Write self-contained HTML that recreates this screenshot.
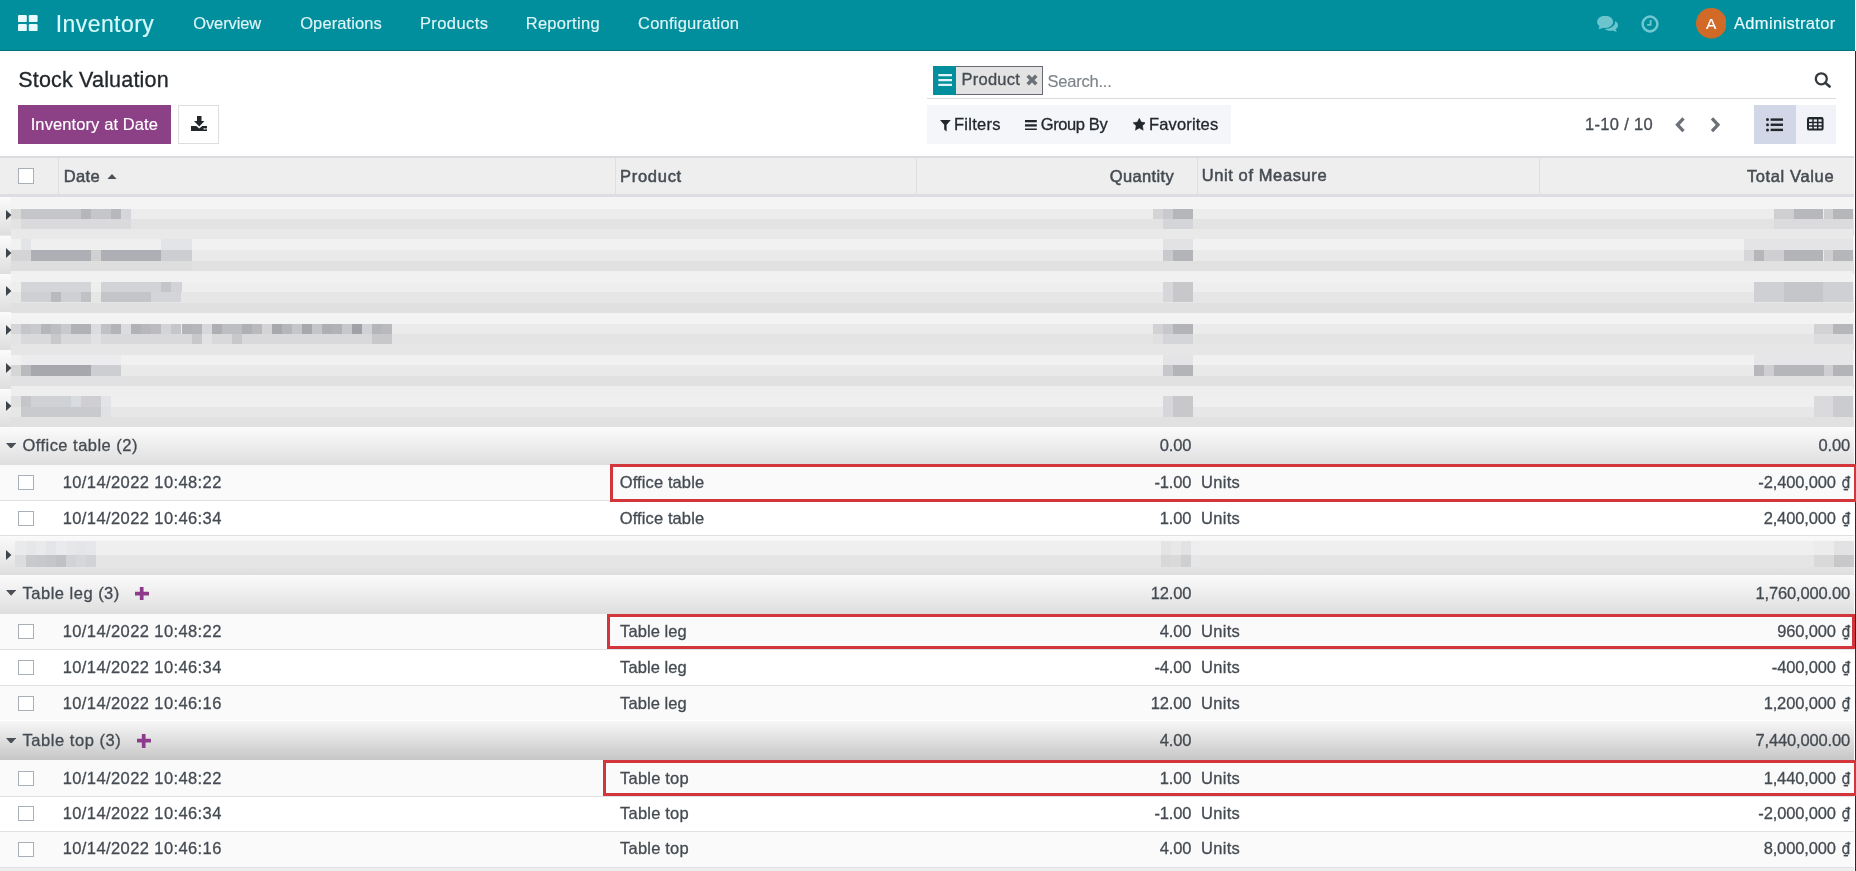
<!DOCTYPE html>
<html><head><meta charset="utf-8"><title>Stock Valuation</title>
<style>
html,body{margin:0;padding:0;}
body{width:1856px;height:871px;overflow:hidden;position:relative;background:#fff;font-family:"Liberation Sans", sans-serif;}
#p{position:absolute;left:0;top:0;width:1856px;height:871px;overflow:hidden;}
#p div,#p svg,#p .t{position:absolute;}
#p .t{line-height:1;white-space:pre;}
</style></head><body><div id="p">
<div style="left:0.00px;top:0.00px;width:1855.30px;height:50.60px;background:#028f9d;border-bottom:1px solid #02707b;box-sizing:border-box;"></div>
<div style="left:18.00px;top:105.20px;width:153.00px;height:38.50px;background:#8c4186;"></div>
<div style="left:178.00px;top:105.20px;width:40.70px;height:38.50px;background:#fff;border:1px solid #dedede;box-sizing:border-box;"></div>
<div style="left:927.00px;top:98.20px;width:908.70px;height:1.00px;background:#d9dcdf;"></div>
<div style="left:933.00px;top:66.20px;width:109.70px;height:28.40px;background:#e3e3e3;border:1px solid #666c72;box-sizing:border-box;"></div>
<div style="left:933.00px;top:66.20px;width:23.00px;height:28.40px;background:#028f9d;"></div>
<div style="left:927.00px;top:105.20px;width:303.80px;height:38.50px;background:#f5f6f9;"></div>
<div style="left:1754.00px;top:105.20px;width:42.00px;height:38.50px;background:#d2d7e7;"></div>
<div style="left:1796.00px;top:105.20px;width:39.70px;height:38.50px;background:#f2f3f8;"></div>
<div style="left:0.00px;top:156.00px;width:1854.00px;height:41.20px;background:#eeeeee;"></div>
<div style="left:0.00px;top:156.00px;width:1854.00px;height:1.80px;background:#d9dbde;"></div>
<div style="left:0.00px;top:194.00px;width:1854.00px;height:3.20px;background:#dcdee1;"></div>
<div style="left:58.00px;top:158.00px;width:1.00px;height:36.00px;background:#dddfe2;"></div>
<div style="left:615.40px;top:158.00px;width:1.00px;height:36.00px;background:#dddfe2;"></div>
<div style="left:916.40px;top:158.00px;width:1.00px;height:36.00px;background:#dddfe2;"></div>
<div style="left:1197.20px;top:158.00px;width:1.00px;height:36.00px;background:#dddfe2;"></div>
<div style="left:1539.30px;top:158.00px;width:1.00px;height:36.00px;background:#dddfe2;"></div>
<div style="left:0.00px;top:197.20px;width:1854.00px;height:11.80px;background:#f4f4f4;"></div>
<div style="left:0.00px;top:208.70px;width:1854.00px;height:10.30px;background:#ececec;"></div>
<div style="left:0.00px;top:218.70px;width:1854.00px;height:10.90px;background:#e3e3e3;"></div>
<div style="left:0.00px;top:229.30px;width:1854.00px;height:10.40px;background:#e9e9e9;"></div>
<div style="left:0.00px;top:239.40px;width:1854.00px;height:11.20px;background:#f1f1f1;"></div>
<div style="left:0.00px;top:250.30px;width:1854.00px;height:10.90px;background:#eaeaea;"></div>
<div style="left:0.00px;top:260.90px;width:1854.00px;height:10.60px;background:#e1e1e1;"></div>
<div style="left:0.00px;top:271.20px;width:1854.00px;height:10.90px;background:#f1f1f1;"></div>
<div style="left:0.00px;top:281.80px;width:1854.00px;height:10.40px;background:#eeeeee;"></div>
<div style="left:0.00px;top:291.90px;width:1854.00px;height:10.90px;background:#e6e6e6;"></div>
<div style="left:0.00px;top:302.50px;width:1854.00px;height:10.60px;background:#e0e0e0;"></div>
<div style="left:0.00px;top:312.80px;width:1854.00px;height:11.00px;background:#f3f3f3;"></div>
<div style="left:0.00px;top:323.50px;width:1854.00px;height:10.30px;background:#ebebeb;"></div>
<div style="left:0.00px;top:333.50px;width:1854.00px;height:10.90px;background:#e4e4e4;"></div>
<div style="left:0.00px;top:344.10px;width:1854.00px;height:10.70px;background:#e6e6e6;"></div>
<div style="left:0.00px;top:354.50px;width:1854.00px;height:10.90px;background:#f1f1f1;"></div>
<div style="left:0.00px;top:365.10px;width:1854.00px;height:10.90px;background:#e9e9e9;"></div>
<div style="left:0.00px;top:375.70px;width:1854.00px;height:10.60px;background:#e1e1e1;"></div>
<div style="left:0.00px;top:386.00px;width:1854.00px;height:10.40px;background:#eeeeee;"></div>
<div style="left:0.00px;top:396.10px;width:1854.00px;height:10.90px;background:#efefef;"></div>
<div style="left:0.00px;top:406.70px;width:1854.00px;height:10.30px;background:#e7e7e7;"></div>
<div style="left:0.00px;top:416.70px;width:1854.00px;height:10.50px;background:#e1e1e1;"></div>
<div style="left:0.00px;top:197.20px;width:11.00px;height:38.30px;background:linear-gradient(#fbfbfb,#dedede);"></div>
<div style="left:0.00px;top:235.50px;width:11.00px;height:38.30px;background:linear-gradient(#fbfbfb,#dedede);"></div>
<div style="left:0.00px;top:273.80px;width:11.00px;height:38.30px;background:linear-gradient(#fbfbfb,#dedede);"></div>
<div style="left:0.00px;top:312.10px;width:11.00px;height:38.30px;background:linear-gradient(#fbfbfb,#dedede);"></div>
<div style="left:0.00px;top:350.40px;width:11.00px;height:38.30px;background:linear-gradient(#fbfbfb,#dedede);"></div>
<div style="left:0.00px;top:388.70px;width:11.00px;height:38.30px;background:linear-gradient(#fbfbfb,#dedede);"></div>
<div style="left:11.00px;top:208.70px;width:10.03px;height:10.00px;background:#d8d8d8;"></div>
<div style="left:21.03px;top:208.70px;width:60.18px;height:10.00px;background:#c4c6ca;"></div>
<div style="left:81.21px;top:208.70px;width:10.03px;height:10.00px;background:#b4b6ba;"></div>
<div style="left:91.24px;top:208.70px;width:20.06px;height:10.00px;background:#c4c6ca;"></div>
<div style="left:111.30px;top:208.70px;width:10.03px;height:10.00px;background:#b6b8bc;"></div>
<div style="left:121.33px;top:208.70px;width:10.03px;height:10.00px;background:#d4d6dc;"></div>
<div style="left:21.03px;top:218.70px;width:110.33px;height:10.60px;background:#dadadc;"></div>
<div style="left:21.03px;top:239.40px;width:10.03px;height:10.90px;background:#e2e4e8;"></div>
<div style="left:31.06px;top:239.40px;width:130.39px;height:10.90px;background:#efefef;"></div>
<div style="left:161.45px;top:239.40px;width:30.09px;height:10.90px;background:#e2e4e8;"></div>
<div style="left:11.00px;top:250.30px;width:20.06px;height:10.60px;background:#d4d4d6;"></div>
<div style="left:31.06px;top:250.30px;width:60.18px;height:10.60px;background:#adafb4;"></div>
<div style="left:91.24px;top:250.30px;width:10.03px;height:10.60px;background:#d0d0d0;"></div>
<div style="left:101.27px;top:250.30px;width:60.18px;height:10.60px;background:#adafb4;"></div>
<div style="left:161.45px;top:250.30px;width:30.09px;height:10.60px;background:#cdced2;"></div>
<div style="left:11.00px;top:260.90px;width:180.54px;height:10.30px;background:#dededf;"></div>
<div style="left:21.03px;top:281.80px;width:70.21px;height:10.10px;background:#d4d5d9;"></div>
<div style="left:101.27px;top:281.80px;width:80.24px;height:10.10px;background:#d2d3d7;"></div>
<div style="left:161.45px;top:281.80px;width:10.03px;height:10.10px;background:#c4c5c9;"></div>
<div style="left:21.03px;top:291.90px;width:70.21px;height:10.60px;background:#cfd0d4;"></div>
<div style="left:51.12px;top:291.90px;width:10.03px;height:10.60px;background:#b9babe;"></div>
<div style="left:81.21px;top:291.90px;width:10.03px;height:10.60px;background:#c0c1c5;"></div>
<div style="left:101.27px;top:291.90px;width:50.15px;height:10.60px;background:#c4c5c9;"></div>
<div style="left:151.42px;top:291.90px;width:30.09px;height:10.60px;background:#d4d5d9;"></div>
<div style="left:11.00px;top:323.50px;width:10.03px;height:10.00px;background:#d6d6d8;"></div>
<div style="left:21.03px;top:323.50px;width:10.03px;height:10.00px;background:#c4c6ca;"></div>
<div style="left:31.06px;top:323.50px;width:10.03px;height:10.00px;background:#c8cacd;"></div>
<div style="left:41.09px;top:323.50px;width:10.03px;height:10.00px;background:#b4b6ba;"></div>
<div style="left:51.12px;top:323.50px;width:10.03px;height:10.00px;background:#bcbec2;"></div>
<div style="left:61.15px;top:323.50px;width:10.03px;height:10.00px;background:#c8cacd;"></div>
<div style="left:71.18px;top:323.50px;width:10.03px;height:10.00px;background:#b0b2b6;"></div>
<div style="left:81.21px;top:323.50px;width:10.03px;height:10.00px;background:#b0b2b6;"></div>
<div style="left:91.24px;top:323.50px;width:10.03px;height:10.00px;background:#dcdcde;"></div>
<div style="left:101.27px;top:323.50px;width:10.03px;height:10.00px;background:#c0c2c6;"></div>
<div style="left:111.30px;top:323.50px;width:10.03px;height:10.00px;background:#b2b4b8;"></div>
<div style="left:121.33px;top:323.50px;width:10.03px;height:10.00px;background:#dcdcde;"></div>
<div style="left:131.36px;top:323.50px;width:10.03px;height:10.00px;background:#b0b2b6;"></div>
<div style="left:141.39px;top:323.50px;width:10.03px;height:10.00px;background:#b6b8bc;"></div>
<div style="left:151.42px;top:323.50px;width:10.03px;height:10.00px;background:#bcbcbe;"></div>
<div style="left:161.45px;top:323.50px;width:10.03px;height:10.00px;background:#d2d4d8;"></div>
<div style="left:171.48px;top:323.50px;width:10.03px;height:10.00px;background:#c6c6c8;"></div>
<div style="left:181.51px;top:323.50px;width:10.03px;height:10.00px;background:#b2b4b8;"></div>
<div style="left:191.54px;top:323.50px;width:10.03px;height:10.00px;background:#b4b6ba;"></div>
<div style="left:201.57px;top:323.50px;width:10.03px;height:10.00px;background:#d8d8da;"></div>
<div style="left:211.60px;top:323.50px;width:10.03px;height:10.00px;background:#adafb4;"></div>
<div style="left:221.63px;top:323.50px;width:10.03px;height:10.00px;background:#bcbec2;"></div>
<div style="left:231.66px;top:323.50px;width:10.03px;height:10.00px;background:#bcbec2;"></div>
<div style="left:241.69px;top:323.50px;width:10.03px;height:10.00px;background:#aeb0b4;"></div>
<div style="left:251.72px;top:323.50px;width:10.03px;height:10.00px;background:#b8babe;"></div>
<div style="left:261.75px;top:323.50px;width:10.03px;height:10.00px;background:#d4d4d6;"></div>
<div style="left:271.78px;top:323.50px;width:10.03px;height:10.00px;background:#a6a8ac;"></div>
<div style="left:281.81px;top:323.50px;width:10.03px;height:10.00px;background:#b4b6ba;"></div>
<div style="left:291.84px;top:323.50px;width:10.03px;height:10.00px;background:#c4c6ca;"></div>
<div style="left:301.87px;top:323.50px;width:10.03px;height:10.00px;background:#a6a8ac;"></div>
<div style="left:311.90px;top:323.50px;width:10.03px;height:10.00px;background:#c4c6ca;"></div>
<div style="left:321.93px;top:323.50px;width:10.03px;height:10.00px;background:#adafb3;"></div>
<div style="left:331.96px;top:323.50px;width:10.03px;height:10.00px;background:#b0b2b6;"></div>
<div style="left:341.99px;top:323.50px;width:10.03px;height:10.00px;background:#c6c8cc;"></div>
<div style="left:352.02px;top:323.50px;width:10.03px;height:10.00px;background:#9fa1a6;"></div>
<div style="left:362.05px;top:323.50px;width:10.03px;height:10.00px;background:#d0d2d6;"></div>
<div style="left:372.08px;top:323.50px;width:10.03px;height:10.00px;background:#b4b6ba;"></div>
<div style="left:382.11px;top:323.50px;width:10.03px;height:10.00px;background:#b8babe;"></div>
<div style="left:21.03px;top:333.50px;width:371.11px;height:10.60px;background:#d9d9db;"></div>
<div style="left:51.12px;top:333.50px;width:10.03px;height:10.60px;background:#c8c8ca;"></div>
<div style="left:191.54px;top:333.50px;width:10.03px;height:10.60px;background:#c8c8ca;"></div>
<div style="left:231.66px;top:333.50px;width:10.03px;height:10.60px;background:#c8c8ca;"></div>
<div style="left:372.08px;top:333.50px;width:10.03px;height:10.60px;background:#c8c8ca;"></div>
<div style="left:382.11px;top:333.50px;width:10.03px;height:10.60px;background:#c8c8ca;"></div>
<div style="left:91.24px;top:333.50px;width:10.03px;height:10.60px;background:#e2e2e2;"></div>
<div style="left:201.57px;top:333.50px;width:10.03px;height:10.60px;background:#e2e2e2;"></div>
<div style="left:21.03px;top:354.50px;width:100.30px;height:10.60px;background:#ececee;"></div>
<div style="left:11.00px;top:365.10px;width:10.03px;height:10.60px;background:#d6d6d6;"></div>
<div style="left:21.03px;top:365.10px;width:10.03px;height:10.60px;background:#b8babd;"></div>
<div style="left:31.06px;top:365.10px;width:60.18px;height:10.60px;background:#a6a8ad;"></div>
<div style="left:91.24px;top:365.10px;width:30.09px;height:10.60px;background:#cdced2;"></div>
<div style="left:11.00px;top:375.70px;width:110.33px;height:10.30px;background:#e1e1e3;"></div>
<div style="left:11.00px;top:396.10px;width:10.03px;height:10.60px;background:#e0e0e0;"></div>
<div style="left:21.03px;top:396.10px;width:10.03px;height:10.60px;background:#c4c6ca;"></div>
<div style="left:31.06px;top:396.10px;width:40.12px;height:10.60px;background:#d0d1d5;"></div>
<div style="left:71.18px;top:396.10px;width:10.03px;height:10.60px;background:#d8dce0;"></div>
<div style="left:81.21px;top:396.10px;width:20.06px;height:10.60px;background:#cfcfd1;"></div>
<div style="left:101.27px;top:396.10px;width:10.03px;height:10.60px;background:#e2e4e8;"></div>
<div style="left:21.03px;top:406.70px;width:80.24px;height:10.00px;background:#c9cace;"></div>
<div style="left:101.27px;top:406.70px;width:10.03px;height:10.00px;background:#dfe1e5;"></div>
<div style="left:1152.60px;top:208.70px;width:10.10px;height:10.00px;background:#d4d4d4;"></div>
<div style="left:1162.70px;top:208.70px;width:10.00px;height:10.00px;background:#c8cace;"></div>
<div style="left:1172.70px;top:208.70px;width:19.90px;height:10.00px;background:#b4b6ba;"></div>
<div style="left:1162.70px;top:218.70px;width:29.90px;height:10.60px;background:#d4d5d9;"></div>
<div style="left:1162.70px;top:239.40px;width:29.90px;height:10.90px;background:#e2e2e4;"></div>
<div style="left:1162.70px;top:250.30px;width:10.00px;height:10.60px;background:#c9cacd;"></div>
<div style="left:1172.70px;top:250.30px;width:19.90px;height:10.60px;background:#b2b4b8;"></div>
<div style="left:1162.70px;top:281.80px;width:10.00px;height:10.10px;background:#d6d7db;"></div>
<div style="left:1172.70px;top:281.80px;width:19.90px;height:10.10px;background:#c8c8ca;"></div>
<div style="left:1162.70px;top:291.90px;width:10.00px;height:10.60px;background:#d6d7db;"></div>
<div style="left:1172.70px;top:291.90px;width:19.90px;height:10.60px;background:#c8c8ca;"></div>
<div style="left:1152.60px;top:323.50px;width:10.10px;height:10.00px;background:#d2d2d4;"></div>
<div style="left:1162.70px;top:323.50px;width:10.00px;height:10.00px;background:#c6c8cc;"></div>
<div style="left:1172.70px;top:323.50px;width:19.90px;height:10.00px;background:#b2b4b8;"></div>
<div style="left:1152.60px;top:333.50px;width:10.10px;height:10.60px;background:#e0e0e0;"></div>
<div style="left:1162.70px;top:333.50px;width:29.90px;height:10.60px;background:#d4d5d9;"></div>
<div style="left:1162.70px;top:354.50px;width:29.90px;height:10.60px;background:#e4e4e6;"></div>
<div style="left:1162.70px;top:365.10px;width:10.00px;height:10.60px;background:#c6c8cc;"></div>
<div style="left:1172.70px;top:365.10px;width:19.90px;height:10.60px;background:#b2b4b8;"></div>
<div style="left:1162.70px;top:396.10px;width:10.00px;height:10.60px;background:#d6d7db;"></div>
<div style="left:1172.70px;top:396.10px;width:19.90px;height:10.60px;background:#c8c8ca;"></div>
<div style="left:1162.70px;top:406.70px;width:10.00px;height:10.00px;background:#d6d7db;"></div>
<div style="left:1172.70px;top:406.70px;width:19.90px;height:10.00px;background:#c8c8ca;"></div>
<div style="left:1774.00px;top:208.70px;width:19.80px;height:10.00px;background:#cfcfd1;"></div>
<div style="left:1793.80px;top:208.70px;width:29.70px;height:10.00px;background:#b6b8bc;"></div>
<div style="left:1823.50px;top:208.70px;width:9.90px;height:10.00px;background:#cdced0;"></div>
<div style="left:1833.40px;top:208.70px;width:19.80px;height:10.00px;background:#b4b6ba;"></div>
<div style="left:1774.00px;top:218.70px;width:79.20px;height:10.60px;background:#dbdbdd;"></div>
<div style="left:1744.30px;top:239.40px;width:108.90px;height:10.90px;background:#e4e4e6;"></div>
<div style="left:1744.30px;top:250.30px;width:9.90px;height:10.60px;background:#d6d6d8;"></div>
<div style="left:1754.20px;top:250.30px;width:9.90px;height:10.60px;background:#b4b6ba;"></div>
<div style="left:1764.10px;top:250.30px;width:19.80px;height:10.60px;background:#cfcfd1;"></div>
<div style="left:1783.90px;top:250.30px;width:39.60px;height:10.60px;background:#b2b4b8;"></div>
<div style="left:1823.50px;top:250.30px;width:9.90px;height:10.60px;background:#cfcfd1;"></div>
<div style="left:1833.40px;top:250.30px;width:19.80px;height:10.60px;background:#b4b6ba;"></div>
<div style="left:1754.20px;top:281.80px;width:99.00px;height:10.10px;background:#cfd0d4;"></div>
<div style="left:1783.90px;top:281.80px;width:39.60px;height:10.10px;background:#c4c6ca;"></div>
<div style="left:1754.20px;top:291.90px;width:99.00px;height:10.60px;background:#cfd0d4;"></div>
<div style="left:1783.90px;top:291.90px;width:39.60px;height:10.60px;background:#c4c6ca;"></div>
<div style="left:1813.60px;top:323.50px;width:19.80px;height:10.00px;background:#d2d2d4;"></div>
<div style="left:1833.40px;top:323.50px;width:19.80px;height:10.00px;background:#b4b6ba;"></div>
<div style="left:1813.60px;top:333.50px;width:39.60px;height:10.60px;background:#dcdcde;"></div>
<div style="left:1754.20px;top:354.50px;width:99.00px;height:10.60px;background:#e6e6e8;"></div>
<div style="left:1754.20px;top:365.10px;width:9.90px;height:10.60px;background:#b6b8bc;"></div>
<div style="left:1764.10px;top:365.10px;width:9.90px;height:10.60px;background:#cfcfd1;"></div>
<div style="left:1774.00px;top:365.10px;width:49.50px;height:10.60px;background:#b4b6ba;"></div>
<div style="left:1823.50px;top:365.10px;width:9.90px;height:10.60px;background:#cfcfd1;"></div>
<div style="left:1833.40px;top:365.10px;width:19.80px;height:10.60px;background:#b2b4b8;"></div>
<div style="left:1813.60px;top:396.10px;width:19.80px;height:10.60px;background:#dadadc;"></div>
<div style="left:1833.40px;top:396.10px;width:19.80px;height:10.60px;background:#cbccd0;"></div>
<div style="left:1813.60px;top:406.70px;width:19.80px;height:10.00px;background:#dadadc;"></div>
<div style="left:1833.40px;top:406.70px;width:19.80px;height:10.00px;background:#cbccd0;"></div>
<div style="left:1853.20px;top:197.20px;width:0.80px;height:38.30px;background:linear-gradient(#fbfbfb,#dedede);"></div>
<div style="left:1853.20px;top:235.50px;width:0.80px;height:38.30px;background:linear-gradient(#fbfbfb,#dedede);"></div>
<div style="left:1853.20px;top:273.80px;width:0.80px;height:38.30px;background:linear-gradient(#fbfbfb,#dedede);"></div>
<div style="left:1853.20px;top:312.10px;width:0.80px;height:38.30px;background:linear-gradient(#fbfbfb,#dedede);"></div>
<div style="left:1853.20px;top:350.40px;width:0.80px;height:38.30px;background:linear-gradient(#fbfbfb,#dedede);"></div>
<div style="left:1853.20px;top:388.70px;width:0.80px;height:38.30px;background:linear-gradient(#fbfbfb,#dedede);"></div>
<div style="left:0.00px;top:427.00px;width:1854.00px;height:37.60px;background:linear-gradient(#fbfbfb,#dedede);"></div>
<div style="left:0.00px;top:575.00px;width:1854.00px;height:38.70px;background:linear-gradient(#fbfbfb,#dedede);"></div>
<div style="left:0.00px;top:720.50px;width:1854.00px;height:39.90px;background:linear-gradient(#f7f7f7,#c6c6c6);"></div>
<div style="left:0.00px;top:535.40px;width:1854.00px;height:39.60px;background:linear-gradient(#fbfbfb,#dedede);"></div>
<div style="left:0.00px;top:535.40px;width:1854.00px;height:1.00px;background:#dee0e3;"></div>
<div style="left:15.40px;top:541.00px;width:1838.40px;height:14.00px;background:#efefef;"></div>
<div style="left:15.40px;top:554.90px;width:1838.40px;height:12.10px;background:#e5e5e5;"></div>
<div style="left:15.40px;top:541.00px;width:10.30px;height:14.00px;background:#e9eaec;"></div>
<div style="left:15.40px;top:554.90px;width:10.30px;height:12.10px;background:#dcdddf;"></div>
<div style="left:25.50px;top:541.00px;width:10.20px;height:14.00px;background:#e6e7e9;"></div>
<div style="left:25.50px;top:554.90px;width:10.20px;height:12.10px;background:#c9cacd;"></div>
<div style="left:35.50px;top:541.00px;width:10.30px;height:14.00px;background:#e9eaec;"></div>
<div style="left:35.50px;top:554.90px;width:10.30px;height:12.10px;background:#c6c8cb;"></div>
<div style="left:45.60px;top:541.00px;width:10.20px;height:14.00px;background:#e4e5e8;"></div>
<div style="left:45.60px;top:554.90px;width:10.20px;height:12.10px;background:#c4c6ca;"></div>
<div style="left:55.60px;top:541.00px;width:10.30px;height:14.00px;background:#e9eaec;"></div>
<div style="left:55.60px;top:554.90px;width:10.30px;height:12.10px;background:#bfc1c5;"></div>
<div style="left:65.70px;top:541.00px;width:10.20px;height:14.00px;background:#e6e7e9;"></div>
<div style="left:65.70px;top:554.90px;width:10.20px;height:12.10px;background:#d2d3d6;"></div>
<div style="left:75.70px;top:541.00px;width:10.30px;height:14.00px;background:#e4e5e8;"></div>
<div style="left:75.70px;top:554.90px;width:10.30px;height:12.10px;background:#d6d7da;"></div>
<div style="left:85.80px;top:541.00px;width:10.20px;height:14.00px;background:#e6e7e9;"></div>
<div style="left:85.80px;top:554.90px;width:10.20px;height:12.10px;background:#d2d3d6;"></div>
<div style="left:1160.80px;top:541.00px;width:10.30px;height:14.00px;background:#e4e4e6;"></div>
<div style="left:1160.80px;top:554.90px;width:10.30px;height:12.10px;background:#d8d8da;"></div>
<div style="left:1170.90px;top:541.00px;width:10.20px;height:14.00px;background:#e8e8e8;"></div>
<div style="left:1170.90px;top:554.90px;width:10.20px;height:12.10px;background:#dadada;"></div>
<div style="left:1180.90px;top:541.00px;width:10.30px;height:14.00px;background:#e2e2e4;"></div>
<div style="left:1180.90px;top:554.90px;width:10.30px;height:12.10px;background:#cfcfd1;"></div>
<div style="left:1191.00px;top:541.00px;width:10.20px;height:14.00px;background:#eeeeee;"></div>
<div style="left:1191.00px;top:554.90px;width:10.20px;height:12.10px;background:#e4e6e8;"></div>
<div style="left:1813.90px;top:541.00px;width:20.30px;height:14.00px;background:#ececec;"></div>
<div style="left:1813.90px;top:554.90px;width:20.30px;height:12.10px;background:#d9d9da;"></div>
<div style="left:1834.00px;top:541.00px;width:20.00px;height:14.00px;background:#e2e2e4;"></div>
<div style="left:1834.00px;top:554.90px;width:20.00px;height:12.10px;background:#c8c8ca;"></div>
<div style="left:0.00px;top:464.60px;width:1854.00px;height:35.70px;background:#fff;"></div>
<div style="left:0.00px;top:500.30px;width:1854.00px;height:35.10px;background:#fff;"></div>
<div style="left:0.00px;top:613.70px;width:1854.00px;height:35.50px;background:#fff;"></div>
<div style="left:0.00px;top:649.20px;width:1854.00px;height:36.10px;background:#fff;"></div>
<div style="left:0.00px;top:685.30px;width:1854.00px;height:35.20px;background:#fff;"></div>
<div style="left:0.00px;top:760.40px;width:1854.00px;height:36.00px;background:#fff;"></div>
<div style="left:0.00px;top:796.40px;width:1854.00px;height:34.90px;background:#fff;"></div>
<div style="left:0.00px;top:831.30px;width:1854.00px;height:35.90px;background:#fff;"></div>
<div style="left:0.00px;top:464.60px;width:1854.00px;height:35.70px;background:#fafafa;"></div>
<div style="left:18.00px;top:475.00px;width:16.00px;height:15.00px;background:#fff;border:1px solid #a9afb6;box-sizing:border-box;"></div>
<div style="left:0.00px;top:499.80px;width:1854.00px;height:1.00px;background:#dfe1e4;"></div>
<div style="left:18.00px;top:511.00px;width:16.00px;height:15.00px;background:#fff;border:1px solid #a9afb6;box-sizing:border-box;"></div>
<div style="left:0.00px;top:613.70px;width:1854.00px;height:35.50px;background:#fafafa;"></div>
<div style="left:18.00px;top:624.00px;width:16.00px;height:15.00px;background:#fff;border:1px solid #a9afb6;box-sizing:border-box;"></div>
<div style="left:0.00px;top:648.70px;width:1854.00px;height:1.00px;background:#dfe1e4;"></div>
<div style="left:18.00px;top:660.00px;width:16.00px;height:15.00px;background:#fff;border:1px solid #a9afb6;box-sizing:border-box;"></div>
<div style="left:0.00px;top:685.30px;width:1854.00px;height:35.20px;background:#fafafa;"></div>
<div style="left:0.00px;top:684.80px;width:1854.00px;height:1.00px;background:#dfe1e4;"></div>
<div style="left:18.00px;top:696.00px;width:16.00px;height:15.00px;background:#fff;border:1px solid #a9afb6;box-sizing:border-box;"></div>
<div style="left:0.00px;top:760.40px;width:1854.00px;height:36.00px;background:#fafafa;"></div>
<div style="left:18.00px;top:771.00px;width:16.00px;height:15.00px;background:#fff;border:1px solid #a9afb6;box-sizing:border-box;"></div>
<div style="left:0.00px;top:795.90px;width:1854.00px;height:1.00px;background:#dfe1e4;"></div>
<div style="left:18.00px;top:806.00px;width:16.00px;height:15.00px;background:#fff;border:1px solid #a9afb6;box-sizing:border-box;"></div>
<div style="left:0.00px;top:831.30px;width:1854.00px;height:35.90px;background:#fafafa;"></div>
<div style="left:0.00px;top:830.80px;width:1854.00px;height:1.00px;background:#dfe1e4;"></div>
<div style="left:18.00px;top:842.00px;width:16.00px;height:15.00px;background:#fff;border:1px solid #a9afb6;box-sizing:border-box;"></div>
<div style="left:0.00px;top:867.20px;width:1854.00px;height:4.00px;background:#eeeeee;"></div>
<div style="left:0.00px;top:867.20px;width:1854.00px;height:1.00px;background:#dfe1e4;"></div>
<div style="left:1855.30px;top:50.60px;width:0.70px;height:830.00px;background:#2a2a2a;"></div>
<div style="left:18.30px;top:168.30px;width:15.60px;height:15.50px;background:#fff;border:1px solid #a9afb6;box-sizing:border-box;"></div>
<div style="left:609.80px;top:464.00px;width:1247.00px;height:37.80px;border:3px solid #d2353a;box-sizing:border-box;"></div>
<div style="left:607.20px;top:614.10px;width:1247.60px;height:34.50px;border:3px solid #d2353a;box-sizing:border-box;"></div>
<div style="left:602.80px;top:759.70px;width:1254.20px;height:36.30px;border:3px solid #d2353a;box-sizing:border-box;"></div>
<svg style="left:18.10px;top:15.00px" width="19.60" height="16.20" viewBox="0 0 19.6 16.2"><g fill="#e9fbfc"><rect x="0" y="0" width="8.8" height="7.1" rx="1.2"/><rect x="10.8" y="0" width="8.8" height="7.1" rx="1.2"/><rect x="0" y="9.1" width="8.8" height="7.1" rx="1.2"/><rect x="10.8" y="9.1" width="8.8" height="7.1" rx="1.2"/></g></svg>
<svg style="left:1597.10px;top:16.30px" width="21.00" height="16.00" viewBox="0 0 21 16"><g fill="#6cc5cd"><ellipse cx="8.1" cy="5.9" rx="8.1" ry="6.1"/><path d="M3 9 L1.5 13.3 L7.5 11.4 Z"/><path d="M18.5 5.2 C20 6.2 21 7.6 21 9.2 C21 10.8 20 12.2 18.6 13.2 L19.8 16 L15.6 14.4 C14.8 14.6 14 14.7 13.2 14.7 C11 14.7 9 14 7.8 12.9 C13.5 12.9 18 10 18 6.2 C18 5.8 18.6 5.5 18.5 5.2 Z"/></g></svg>
<svg style="left:1640.70px;top:14.50px" width="18.00" height="18.00" viewBox="0 0 18 18"><circle cx="9" cy="9" r="7.4" fill="none" stroke="#72c8d0" stroke-width="2.5"/><path d="M9.6 5 V9.9 H6.2" fill="none" stroke="#72c8d0" stroke-width="1.8"/></svg>
<svg style="left:1695.90px;top:8.20px" width="30.60" height="30.60" viewBox="0 0 30.6 30.6"><circle cx="15.3" cy="15.3" r="15.3" fill="#d06a26"/></svg>
<svg style="left:190.50px;top:116.00px" width="16.50" height="15.00" viewBox="0 0 16.5 15"><g fill="#22272c"><path d="M6 0 H10.5 V5 H13.5 L8.25 10.5 L3 5 H6 Z"/><path d="M0 10 H5.3 L8.25 12.4 L11.2 10 H16.5 V15 H0 Z"/></g><rect x="12.6" y="12.2" width="1.3" height="1.3" fill="#fff"/><rect x="14.4" y="12.2" width="1.3" height="1.3" fill="#fff"/></svg>
<svg style="left:1813.50px;top:72.00px" width="17.00" height="16.00" viewBox="0 0 17 16"><circle cx="7.3" cy="6.8" r="5.5" fill="none" stroke="#353a3f" stroke-width="2.3"/><path d="M11.2 10.8 L15.6 14.5" stroke="#353a3f" stroke-width="2.6" stroke-linecap="round"/></svg>
<svg style="left:937.60px;top:74.00px" width="14.60" height="12.20" viewBox="0 0 15 13"><g fill="#dff6f8"><rect x="0" y="0" width="15" height="2.4" rx=".6"/><rect x="0" y="5.2" width="15" height="2.4" rx=".6"/><rect x="0" y="10.4" width="15" height="2.4" rx=".6"/></g></svg>
<svg style="left:1025.60px;top:74.20px" width="12.00" height="12.00" viewBox="0 0 12 12"><path d="M1.7 1.7 L10.3 10.3 M10.3 1.7 L1.7 10.3" stroke="#6a7076" stroke-width="3.4" stroke-linecap="butt"/></svg>
<svg style="left:939.90px;top:120.00px" width="10.80" height="11.50" viewBox="0 0 10.8 11.5"><path d="M0 0 H10.8 L6.6 4.8 V11.5 L4.2 9.4 V4.8 Z" fill="#22272c"/></svg>
<svg style="left:1024.80px;top:119.70px" width="11.80" height="10.80" viewBox="0 0 11.8 10.8"><g fill="#22272c"><rect x="0" y="0" width="11.8" height="2.3"/><rect x="0" y="4.25" width="11.8" height="2.3"/><rect x="0" y="8.5" width="11.8" height="2.3"/></g></svg>
<svg style="left:1132.60px;top:118.30px" width="12.60" height="12.40" viewBox="0 0 12.6 12"><path d="M6.3 0 L8.25 3.9 L12.6 4.5 L9.45 7.5 L10.2 12 L6.3 9.9 L2.4 12 L3.15 7.5 L0 4.5 L4.35 3.9 Z" fill="#22272c" stroke="#22272c" stroke-width=".5" stroke-linejoin="round"/></svg>
<svg style="left:1674.50px;top:116.60px" width="10.50" height="15.60" viewBox="0 0 10.5 15.6"><path d="M8.5 1.4 L2.5 7.8 L8.5 14.2" fill="none" stroke="#6c7177" stroke-width="3.3"/></svg>
<svg style="left:1709.90px;top:116.60px" width="10.50" height="15.60" viewBox="0 0 10.5 15.6"><path d="M2 1.4 L8 7.8 L2 14.2" fill="none" stroke="#6c7177" stroke-width="3.3"/></svg>
<svg style="left:1765.90px;top:118.40px" width="17.50" height="13.50" viewBox="0 0 17.5 13.5"><g fill="#22272c"><circle cx="1.5" cy="1.6" r="1.5"/><circle cx="1.5" cy="6.75" r="1.5"/><circle cx="1.5" cy="11.9" r="1.5"/><rect x="4.6" y=".4" width="12.9" height="2.4"/><rect x="4.6" y="5.55" width="12.9" height="2.4"/><rect x="4.6" y="10.7" width="12.9" height="2.4"/></g></svg>
<svg style="left:1807.20px;top:117.40px" width="16.60" height="13.60" viewBox="0 0 16.6 13.6"><rect x="1" y="1" width="14.6" height="11.6" rx="1.2" fill="none" stroke="#22272c" stroke-width="2"/><path d="M1 1.6 H15.6" stroke="#22272c" stroke-width="1.6"/><path d="M1 5.4 H15.6 M1 9.1 H15.6 M6 1 V12.6 M10.7 1 V12.6" stroke="#22272c" stroke-width="1.5"/></svg>
<svg style="left:107.00px;top:173.70px" width="10.00" height="5.40" viewBox="0 0 10 5.4"><path d="M0 5.4 L5 0 L10 5.4 Z" fill="#4b5057"/></svg>
<svg style="left:6.20px;top:209.80px" width="5.40" height="10.00" viewBox="0 0 5.4 10"><path d="M0 0 L5.4 5 L0 10 Z" fill="#3f444a"/></svg>
<svg style="left:6.20px;top:248.10px" width="5.40" height="10.00" viewBox="0 0 5.4 10"><path d="M0 0 L5.4 5 L0 10 Z" fill="#3f444a"/></svg>
<svg style="left:6.20px;top:286.40px" width="5.40" height="10.00" viewBox="0 0 5.4 10"><path d="M0 0 L5.4 5 L0 10 Z" fill="#3f444a"/></svg>
<svg style="left:6.20px;top:324.70px" width="5.40" height="10.00" viewBox="0 0 5.4 10"><path d="M0 0 L5.4 5 L0 10 Z" fill="#3f444a"/></svg>
<svg style="left:6.20px;top:363.00px" width="5.40" height="10.00" viewBox="0 0 5.4 10"><path d="M0 0 L5.4 5 L0 10 Z" fill="#3f444a"/></svg>
<svg style="left:6.20px;top:401.30px" width="5.40" height="10.00" viewBox="0 0 5.4 10"><path d="M0 0 L5.4 5 L0 10 Z" fill="#3f444a"/></svg>
<svg style="left:6.20px;top:549.50px" width="5.40" height="10.00" viewBox="0 0 5.4 10"><path d="M0 0 L5.4 5 L0 10 Z" fill="#3f444a"/></svg>
<svg style="left:6.00px;top:442.70px" width="10.20" height="5.80" viewBox="0 0 10.2 5.8"><path d="M0 0 H10.2 L5.1 5.8 Z" fill="#4b5057"/></svg>
<svg style="left:6.00px;top:590.30px" width="10.20" height="5.80" viewBox="0 0 10.2 5.8"><path d="M0 0 H10.2 L5.1 5.8 Z" fill="#4b5057"/></svg>
<svg style="left:135.40px;top:586.80px" width="13.40" height="13.40" viewBox="0 0 13.4 13.4"><path d="M6.7 .4 V13 M.4 6.7 H13" stroke="#8d398c" stroke-width="3.7" stroke-linecap="round"/></svg>
<svg style="left:6.00px;top:737.70px" width="10.20" height="5.80" viewBox="0 0 10.2 5.8"><path d="M0 0 H10.2 L5.1 5.8 Z" fill="#4b5057"/></svg>
<svg style="left:137.40px;top:734.20px" width="13.40" height="13.40" viewBox="0 0 13.4 13.4"><path d="M6.7 .4 V13 M.4 6.7 H13" stroke="#8d398c" stroke-width="3.7" stroke-linecap="round"/></svg>
<div id="tx" style="left:0;top:0;width:1856px;height:871px;will-change:transform;">
<span class="t" style="left:55.80px;top:13.00px;font-size:23px;color:#d8fafc;letter-spacing:0.412px;-webkit-text-stroke:0.15px #d8fafc;">Inventory</span>
<span class="t" style="left:193.30px;top:15.00px;font-size:16.5px;color:#def4f6;letter-spacing:-0.135px;-webkit-text-stroke:0.15px #def4f6;">Overview</span>
<span class="t" style="left:300.20px;top:15.00px;font-size:16.5px;color:#def4f6;letter-spacing:0.093px;-webkit-text-stroke:0.15px #def4f6;">Operations</span>
<span class="t" style="left:419.90px;top:15.00px;font-size:16.5px;color:#def4f6;letter-spacing:0.419px;-webkit-text-stroke:0.15px #def4f6;">Products</span>
<span class="t" style="left:525.70px;top:15.00px;font-size:16.5px;color:#def4f6;letter-spacing:0.292px;-webkit-text-stroke:0.15px #def4f6;">Reporting</span>
<span class="t" style="left:638.00px;top:15.00px;font-size:16.5px;color:#def4f6;letter-spacing:0.236px;-webkit-text-stroke:0.15px #def4f6;">Configuration</span>
<span class="t" style="left:1734.00px;top:15.00px;font-size:16.5px;color:#e9fbfc;letter-spacing:0.333px;-webkit-text-stroke:0.15px #e9fbfc;">Administrator</span>
<span class="t" style="left:1705.90px;top:16.00px;font-size:15.5px;color:#ffffff;letter-spacing:0.000px;-webkit-text-stroke:0.15px #ffffff;">A</span>
<span class="t" style="left:18.20px;top:70.00px;font-size:21.5px;color:#22272c;letter-spacing:0.190px;-webkit-text-stroke:0.3px #22272c;">Stock Valuation</span>
<span class="t" style="left:30.70px;top:116.00px;font-size:16.5px;color:#ffffff;letter-spacing:0.102px;-webkit-text-stroke:0.15px #ffffff;">Inventory at Date</span>
<span class="t" style="left:961.50px;top:71.00px;font-size:16.5px;color:#454b52;letter-spacing:0.253px;-webkit-text-stroke:0.3px #454b52;">Product</span>
<span class="t" style="left:1047.60px;top:73.00px;font-size:16.5px;color:#7d838a;letter-spacing:-0.231px;-webkit-text-stroke:0.15px #7d838a;">Search...</span>
<span class="t" style="left:954.00px;top:116.00px;font-size:16.5px;color:#22272c;letter-spacing:0.256px;-webkit-text-stroke:0.3px #22272c;">Filters</span>
<span class="t" style="left:1040.70px;top:116.00px;font-size:16.5px;color:#22272c;letter-spacing:-0.393px;-webkit-text-stroke:0.3px #22272c;">Group By</span>
<span class="t" style="left:1149.00px;top:116.00px;font-size:16.5px;color:#22272c;letter-spacing:0.162px;-webkit-text-stroke:0.3px #22272c;">Favorites</span>
<span class="t" style="left:1585.00px;top:116.00px;font-size:16.5px;color:#454b52;letter-spacing:0.331px;-webkit-text-stroke:0.3px #454b52;">1-10 / 10</span>
<span class="t" style="left:63.80px;top:168.00px;font-size:16.5px;color:#454b52;letter-spacing:0.308px;-webkit-text-stroke:0.5px #454b52;">Date</span>
<span class="t" style="left:620.00px;top:168.00px;font-size:16.5px;color:#454b52;letter-spacing:0.720px;-webkit-text-stroke:0.5px #454b52;">Product</span>
<span class="t" style="left:1109.80px;top:168.00px;font-size:16.5px;color:#454b52;letter-spacing:0.357px;-webkit-text-stroke:0.5px #454b52;">Quantity</span>
<span class="t" style="left:1201.70px;top:167.00px;font-size:16.5px;color:#454b52;letter-spacing:0.601px;-webkit-text-stroke:0.5px #454b52;">Unit of Measure</span>
<span class="t" style="left:1746.90px;top:168.00px;font-size:16.5px;color:#454b52;letter-spacing:0.626px;-webkit-text-stroke:0.5px #454b52;">Total Value</span>
<span class="t" style="left:22.40px;top:437.00px;font-size:16.5px;color:#454b52;letter-spacing:0.472px;-webkit-text-stroke:0.3px #454b52;">Office table (2)</span>
<span class="t" style="left:1159.81px;top:437.00px;font-size:16.5px;color:#454b52;letter-spacing:-0.150px;-webkit-text-stroke:0.3px #454b52;">0.00</span>
<span class="t" style="left:1818.51px;top:437.00px;font-size:16.5px;color:#454b52;letter-spacing:-0.150px;-webkit-text-stroke:0.3px #454b52;">0.00</span>
<span class="t" style="left:22.60px;top:585.00px;font-size:16.5px;color:#454b52;letter-spacing:0.491px;-webkit-text-stroke:0.3px #454b52;">Table leg (3)</span>
<span class="t" style="left:1150.79px;top:585.00px;font-size:16.5px;color:#454b52;letter-spacing:-0.150px;-webkit-text-stroke:0.3px #454b52;">12.00</span>
<span class="t" style="left:1755.49px;top:585.00px;font-size:16.5px;color:#454b52;letter-spacing:-0.150px;-webkit-text-stroke:0.3px #454b52;">1,760,000.00</span>
<span class="t" style="left:22.40px;top:732.00px;font-size:16.5px;color:#454b52;letter-spacing:0.556px;-webkit-text-stroke:0.3px #454b52;">Table top (3)</span>
<span class="t" style="left:1159.81px;top:732.00px;font-size:16.5px;color:#454b52;letter-spacing:-0.150px;-webkit-text-stroke:0.3px #454b52;">4.00</span>
<span class="t" style="left:1755.49px;top:732.00px;font-size:16.5px;color:#454b52;letter-spacing:-0.150px;-webkit-text-stroke:0.3px #454b52;">7,440,000.00</span>
<span class="t" style="left:62.70px;top:474.00px;font-size:16.5px;color:#454b52;letter-spacing:0.405px;-webkit-text-stroke:0.3px #454b52;">10/14/2022 10:48:22</span>
<span class="t" style="left:619.80px;top:474.00px;font-size:16.5px;color:#454b52;letter-spacing:0.101px;-webkit-text-stroke:0.3px #454b52;">Office table</span>
<span class="t" style="left:1154.47px;top:474.00px;font-size:16.5px;color:#454b52;letter-spacing:-0.150px;-webkit-text-stroke:0.3px #454b52;">-1.00</span>
<span class="t" style="left:1201.00px;top:474.00px;font-size:16.5px;color:#454b52;letter-spacing:0.289px;-webkit-text-stroke:0.3px #454b52;">Units</span>
<span class="t" style="left:1758.33px;top:474.00px;font-size:16.5px;color:#454b52;letter-spacing:-0.150px;-webkit-text-stroke:0.3px #454b52;">-2,400,000</span>
<span class="t" style="left:1841.50px;top:476.00px;font-size:15.5px;color:#454b52;letter-spacing:0.000px;-webkit-text-stroke:0.3px #454b52;font-family:'DejaVu Sans Condensed','DejaVu Sans',sans-serif;">₫</span>
<span class="t" style="left:62.70px;top:510.00px;font-size:16.5px;color:#454b52;letter-spacing:0.405px;-webkit-text-stroke:0.3px #454b52;">10/14/2022 10:46:34</span>
<span class="t" style="left:619.80px;top:510.00px;font-size:16.5px;color:#454b52;letter-spacing:0.101px;-webkit-text-stroke:0.3px #454b52;">Office table</span>
<span class="t" style="left:1159.81px;top:510.00px;font-size:16.5px;color:#454b52;letter-spacing:-0.150px;-webkit-text-stroke:0.3px #454b52;">1.00</span>
<span class="t" style="left:1201.00px;top:510.00px;font-size:16.5px;color:#454b52;letter-spacing:0.289px;-webkit-text-stroke:0.3px #454b52;">Units</span>
<span class="t" style="left:1763.67px;top:510.00px;font-size:16.5px;color:#454b52;letter-spacing:-0.150px;-webkit-text-stroke:0.3px #454b52;">2,400,000</span>
<span class="t" style="left:1841.50px;top:512.00px;font-size:15.5px;color:#454b52;letter-spacing:0.000px;-webkit-text-stroke:0.3px #454b52;font-family:'DejaVu Sans Condensed','DejaVu Sans',sans-serif;">₫</span>
<span class="t" style="left:62.70px;top:623.00px;font-size:16.5px;color:#454b52;letter-spacing:0.405px;-webkit-text-stroke:0.3px #454b52;">10/14/2022 10:48:22</span>
<span class="t" style="left:620.10px;top:623.00px;font-size:16.5px;color:#454b52;letter-spacing:0.079px;-webkit-text-stroke:0.3px #454b52;">Table leg</span>
<span class="t" style="left:1159.81px;top:623.00px;font-size:16.5px;color:#454b52;letter-spacing:-0.150px;-webkit-text-stroke:0.3px #454b52;">4.00</span>
<span class="t" style="left:1201.00px;top:623.00px;font-size:16.5px;color:#454b52;letter-spacing:0.289px;-webkit-text-stroke:0.3px #454b52;">Units</span>
<span class="t" style="left:1777.13px;top:623.00px;font-size:16.5px;color:#454b52;letter-spacing:-0.150px;-webkit-text-stroke:0.3px #454b52;">960,000</span>
<span class="t" style="left:1841.50px;top:625.00px;font-size:15.5px;color:#454b52;letter-spacing:0.000px;-webkit-text-stroke:0.3px #454b52;font-family:'DejaVu Sans Condensed','DejaVu Sans',sans-serif;">₫</span>
<span class="t" style="left:62.70px;top:659.00px;font-size:16.5px;color:#454b52;letter-spacing:0.405px;-webkit-text-stroke:0.3px #454b52;">10/14/2022 10:46:34</span>
<span class="t" style="left:620.10px;top:659.00px;font-size:16.5px;color:#454b52;letter-spacing:0.079px;-webkit-text-stroke:0.3px #454b52;">Table leg</span>
<span class="t" style="left:1154.47px;top:659.00px;font-size:16.5px;color:#454b52;letter-spacing:-0.150px;-webkit-text-stroke:0.3px #454b52;">-4.00</span>
<span class="t" style="left:1201.00px;top:659.00px;font-size:16.5px;color:#454b52;letter-spacing:0.289px;-webkit-text-stroke:0.3px #454b52;">Units</span>
<span class="t" style="left:1771.79px;top:659.00px;font-size:16.5px;color:#454b52;letter-spacing:-0.150px;-webkit-text-stroke:0.3px #454b52;">-400,000</span>
<span class="t" style="left:1841.50px;top:661.00px;font-size:15.5px;color:#454b52;letter-spacing:0.000px;-webkit-text-stroke:0.3px #454b52;font-family:'DejaVu Sans Condensed','DejaVu Sans',sans-serif;">₫</span>
<span class="t" style="left:62.70px;top:695.00px;font-size:16.5px;color:#454b52;letter-spacing:0.405px;-webkit-text-stroke:0.3px #454b52;">10/14/2022 10:46:16</span>
<span class="t" style="left:620.10px;top:695.00px;font-size:16.5px;color:#454b52;letter-spacing:0.079px;-webkit-text-stroke:0.3px #454b52;">Table leg</span>
<span class="t" style="left:1150.79px;top:695.00px;font-size:16.5px;color:#454b52;letter-spacing:-0.150px;-webkit-text-stroke:0.3px #454b52;">12.00</span>
<span class="t" style="left:1201.00px;top:695.00px;font-size:16.5px;color:#454b52;letter-spacing:0.289px;-webkit-text-stroke:0.3px #454b52;">Units</span>
<span class="t" style="left:1763.67px;top:695.00px;font-size:16.5px;color:#454b52;letter-spacing:-0.150px;-webkit-text-stroke:0.3px #454b52;">1,200,000</span>
<span class="t" style="left:1841.50px;top:697.00px;font-size:15.5px;color:#454b52;letter-spacing:0.000px;-webkit-text-stroke:0.3px #454b52;font-family:'DejaVu Sans Condensed','DejaVu Sans',sans-serif;">₫</span>
<span class="t" style="left:62.70px;top:770.00px;font-size:16.5px;color:#454b52;letter-spacing:0.405px;-webkit-text-stroke:0.3px #454b52;">10/14/2022 10:48:22</span>
<span class="t" style="left:620.10px;top:770.00px;font-size:16.5px;color:#454b52;letter-spacing:0.201px;-webkit-text-stroke:0.3px #454b52;">Table top</span>
<span class="t" style="left:1159.81px;top:770.00px;font-size:16.5px;color:#454b52;letter-spacing:-0.150px;-webkit-text-stroke:0.3px #454b52;">1.00</span>
<span class="t" style="left:1201.00px;top:770.00px;font-size:16.5px;color:#454b52;letter-spacing:0.289px;-webkit-text-stroke:0.3px #454b52;">Units</span>
<span class="t" style="left:1763.67px;top:770.00px;font-size:16.5px;color:#454b52;letter-spacing:-0.150px;-webkit-text-stroke:0.3px #454b52;">1,440,000</span>
<span class="t" style="left:1841.50px;top:772.00px;font-size:15.5px;color:#454b52;letter-spacing:0.000px;-webkit-text-stroke:0.3px #454b52;font-family:'DejaVu Sans Condensed','DejaVu Sans',sans-serif;">₫</span>
<span class="t" style="left:62.70px;top:805.00px;font-size:16.5px;color:#454b52;letter-spacing:0.405px;-webkit-text-stroke:0.3px #454b52;">10/14/2022 10:46:34</span>
<span class="t" style="left:620.10px;top:805.00px;font-size:16.5px;color:#454b52;letter-spacing:0.201px;-webkit-text-stroke:0.3px #454b52;">Table top</span>
<span class="t" style="left:1154.47px;top:805.00px;font-size:16.5px;color:#454b52;letter-spacing:-0.150px;-webkit-text-stroke:0.3px #454b52;">-1.00</span>
<span class="t" style="left:1201.00px;top:805.00px;font-size:16.5px;color:#454b52;letter-spacing:0.289px;-webkit-text-stroke:0.3px #454b52;">Units</span>
<span class="t" style="left:1758.33px;top:805.00px;font-size:16.5px;color:#454b52;letter-spacing:-0.150px;-webkit-text-stroke:0.3px #454b52;">-2,000,000</span>
<span class="t" style="left:1841.50px;top:807.00px;font-size:15.5px;color:#454b52;letter-spacing:0.000px;-webkit-text-stroke:0.3px #454b52;font-family:'DejaVu Sans Condensed','DejaVu Sans',sans-serif;">₫</span>
<span class="t" style="left:62.70px;top:840.00px;font-size:16.5px;color:#454b52;letter-spacing:0.405px;-webkit-text-stroke:0.3px #454b52;">10/14/2022 10:46:16</span>
<span class="t" style="left:620.10px;top:840.00px;font-size:16.5px;color:#454b52;letter-spacing:0.201px;-webkit-text-stroke:0.3px #454b52;">Table top</span>
<span class="t" style="left:1159.81px;top:840.00px;font-size:16.5px;color:#454b52;letter-spacing:-0.150px;-webkit-text-stroke:0.3px #454b52;">4.00</span>
<span class="t" style="left:1201.00px;top:840.00px;font-size:16.5px;color:#454b52;letter-spacing:0.289px;-webkit-text-stroke:0.3px #454b52;">Units</span>
<span class="t" style="left:1763.67px;top:840.00px;font-size:16.5px;color:#454b52;letter-spacing:-0.150px;-webkit-text-stroke:0.3px #454b52;">8,000,000</span>
<span class="t" style="left:1841.50px;top:842.00px;font-size:15.5px;color:#454b52;letter-spacing:0.000px;-webkit-text-stroke:0.3px #454b52;font-family:'DejaVu Sans Condensed','DejaVu Sans',sans-serif;">₫</span>
</div>
</div></body></html>
